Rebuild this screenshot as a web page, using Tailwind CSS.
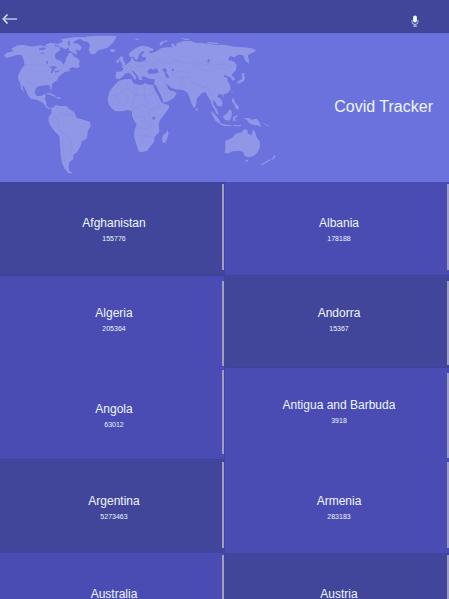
<!DOCTYPE html>
<html lang="en">
<head>
<meta charset="utf-8">
<meta name="viewport" content="width=device-width, initial-scale=1">
<title>Covid Tracker</title>
<script src="https://cdn.jsdelivr.net/npm/@tailwindcss/browser@4"></script>
</head>
<body class="flex h-screen flex-col bg-[#4a4cb3] font-['Liberation_Sans',Arial,sans-serif] text-[#eef6fb]">
<header class="flex h-[33px] shrink-0 items-center justify-between bg-[#42469b] pt-1 pr-7">
  <button type="button" aria-label="Back" class="flex h-6 w-5 items-center">
    <svg class="h-3 w-5" viewBox="0 0 20 12" fill="none" stroke="#e6eff8"><path d="M7.5 1.5 3.2 6l4.3 4.5" stroke-width="1.4"/><path d="M3 6h14" stroke="#bcc7e2" stroke-width="1.5"/></svg>
  </button>
  <button type="button" aria-label="Voice search" class="flex h-6 w-3 items-center justify-center pt-1">
    <svg class="h-3 w-2" viewBox="0 0 8 12"><rect x="2.1" y=".6" width="3.8" height="6.9" rx="1.9" fill="#f4fbff"/><path d="M1 5v1.5a3 3 0 0 0 6 0V5M4 9.3v1.9M2 11.2h4" fill="none" stroke="#c5d5e8" stroke-width=".9"/></svg>
  </button>
</header>
<main class="min-h-0 flex-1 overflow-x-hidden overflow-y-auto [scrollbar-width:none]">
<section class="flex h-[149px] items-center justify-between bg-[#6b72de] pr-4">
  <svg class="h-[149px] w-[300px] shrink-0" viewBox="0 9 900 447" role="img" aria-label="World map">
    <g fill="#9197e7">
      <path d="M12 78L20 68 34 66 40 62 34 56 52 46 72 45 96 50 120 46 150 52 168 46 176 52 182 60 172 66 164 74 168 88 184 94 190 104 196 96 198 84 206 72 206 68 216 70 222 80 232 84 240 94 236 104 242 108 232 114 216 112 206 118 212 122 194 126 176 140 172 150 156 162 154 184 148 166 134 166 118 168 108 174 104 188 110 198 124 198 132 192 138 196 134 206 138 212 140 228 148 234 158 232 148 238 138 232 130 220 112 210 92 206 84 196 78 182 72 170 66 164 72 188 64 176 60 158 54 146 56 132 64 118 74 104 70 88 66 76 50 74 34 80 20 84Z"/>
      <path d="M134 46L150 38 174 42 190 34 182 28 206 24 232 21 252 21 238 27 226 32 218 38 236 42 246 52 240 62 228 58 232 74 218 68 206 60 208 52 196 58 184 52 160 56 146 52Z"/>
      <path d="M238 25L266 19 306 17 350 18 346 28 338 40 322 54 296 60 284 72 272 73 266 60 270 46 264 36 250 33Z"/>
      <path d="M328 61l8-4 10 2 0 5-10 3zM134 192l12-4 16 6 8 6-12-2-12-5zM168 202l12 0 6 3-14 1z"/>
      <path d="M154 236L168 225 180 228 198 228 212 240 224 248 230 264 246 268 270 276 272 288 264 302 260 326 246 334 240 352 230 368 220 374 220 388 208 396 206 412 208 424 220 430 206 430 194 416 186 398 182 374 180 342 178 318 164 304 152 288 145 272 146 262 154 250Z"/>
      <path d="M347 145L348 126 366 124 370 116 364 108 378 104 386 98 392 92 394 84 400 84 402 94 420 94 436 92 438 82 428 82 424 76 434 66 426 64 416 76 414 88 406 90 402 80 390 82 386 72 396 62 412 52 428 47 444 50 460 57 458 64 446 64 450 70 466 66 484 54 500 52 520 52 512 44 518 40 528 50 530 40 548 34 572 32 586 38 610 40 640 44 676 44 700 50 730 52 752 54 770 62 756 68 744 76 748 102 736 92 730 76 714 74 704 82 690 78 684 90 700 94 710 104 708 120 700 128 694 134 706 148 698 152 690 140 680 138 674 134 670 140 684 144 682 152 690 164 692 178 682 190 668 194 656 192 652 200 662 206 668 220 664 230 652 228 646 216 638 210 640 222 654 244 644 238 636 226 632 212 624 200 616 186 606 188 590 206 588 228 582 234 574 220 568 202 562 188 550 180 526 178 510 172 520 182 530 190 522 204 504 214 490 218 486 208 474 186 462 168 464 148 448 146 438 142 424 138 428 150 418 150 412 136 400 124 394 122 410 142 404 150 398 138 388 128 376 130 368 140 356 148Z"/>
      <path d="M366 105l-2-8-8-10 6-8 8 2 0 10 6 8-2 6zM348 98l2-9 8 0-2 9zM478 46l4-10 18-5 4 2-16 6-2 7zM540 24l20 2 12 4-16 0zM402 26l20 0-10 4zM620 36l34 3 0 3-30-1z"/>
      <path d="M356 152L376 148 394 146 400 160 416 164 424 166 434 160 448 164 462 165 472 184 484 204 492 222 508 226 506 236 492 254 480 270 476 284 478 306 464 320 462 336 450 350 442 362 424 367 416 364 408 340 402 318 404 300 410 284 400 268 396 254 396 244 384 240 366 244 346 244 334 234 326 222 323 206 328 186 338 172Z"/>
      <path d="M502 301l4 8-4 16-6 13-8 0-2-12 4-12 8-4zM587 234l7 3 0 4-6 1zM632 242l8 6 14 16 8 14-2 4-14-10-8-16zM662 280l18 4 14 2 0 3-20-1-14-5zM644 236l8 6 4 12-6-3-6-10zM670 258l12-8 6-12 8 6-2 16-6 12-12-2-6-6zM700 260l10-4 4 2-10 6 6 10-4 0-2-8-2 8-4-2zM696 203l6 4 4 12 10 10 0 10-8-2-4-12-8-10zM732 264l14 0 10 6 14-4 8 10 6 16-10-6-10 0-16-6-8-10zM666 198l6-3 0 6zM694 184l4-2-2 8zM700 286l24-1 0 3-22 1zM784 276l16 8 14 8-14-5z"/>
      <path d="M724 128l8 2 3 18-8 8-14 5-2-5 14-8 2-12z"/>
      <path d="M676 332L696 324 706 312 716 308 724 308 732 298 744 300 742 310 754 316 760 298 766 308 770 322 780 336 780 350 772 368 760 378 746 382 734 378 730 366 718 362 698 364 686 370 674 370 676 358ZM736 389l10 0-4 7-5-2zM822 374l6 5-10 10-4-2 6-5zM812 389l-10 8-16 9-4-2 12-7 14-9z"/>
    </g>
    <g fill="#6b72de">
      <path d="M116 56l14-4 10 2-10 6-12 0zM118 71l12-4 4 4zM140 92l4 1 0 8-5 0zM166 44l12 4-2 3-12-3zM208 32l2 16-6-2 0-12z"/>
      <path d="M148 110l16-2 8 6-8 2-6 12-6 2 4-14zM164 124l14-3 0 3-12 4z"/>
      <path d="M442 124l10-9 6 4 12-4 6 12-12 4-18 0zM487 118l10-4 4 8-4 4 8 10 2 8-10-2-2-12zM516 116l6 2-1 6-6 0zM624 87l5 1-1 9-6 0zM458 260l8 0-2 9-7-1z"/>
      <path d="M416 84l8 2 4 8-16 2 2-6 6-2zM461 163l6 2 18 36 6 18-7-2-12-24-11-20zM498 162l8 4 10 12 8 3-10 3-10-8z"/>
    </g>
    <g fill="none" stroke="#858be2" stroke-width="1.6">
      <path d="M74 106h70l20 8M68 58l14-10M80 158l18 2 10 10M364 154l-20 30M326 198l24-4 30-20 24 20 32 2 24-4M380 154l2 20M400 158l8 22 0 16M432 164l4 40 14 22M350 194l8 30M382 200l-4 22-20 12M404 198l-8 30 6 20M404 234l26-10 22 16 28-10M404 262l28-4 8 20 22 14M406 294l30 4 20-12M410 316l32 0 12-14M422 338l12-20 20 4M448 246l4 50M464 202l18 28"/>
      <path d="M170 228l6 20 24 8 24-14M150 268l16-8 10 14-4 20 20 14 20 22 12 8M178 304l14 6-4 36 6 50M214 330l2 24-4 24M204 258l20-2"/>
      <path d="M384 104l14 8-8 12M400 96l12 14 28-4M416 98l28-2 22 16M460 104l14-14 24 10M502 100l24-10 30 10 26-4 26 12 20-8 20 6 24-6 22 10M580 100l20 18 32 8 28-12 20 2M516 130l24-8 28 8 14-20M534 144l26-4 22 22 30 8 18-12M550 142l-10 18 16 12M474 136l18 16 12 20M596 170l26 4 14 22M464 154l20 16 22 12"/>
    </g>
  </svg>
  <h1 class="pb-0.5 text-base leading-5 whitespace-nowrap">Covid Tracker</h1>
</section>
<ul id="countries" class="-mr-px grid auto-rows-[93px] grid-cols-2 grid-rows-[94px_92px_92px] text-center"></ul>
</main>
<template id="country">
  <li class="flex border-r border-[#41449f]">
    <button type="button" class="flex w-full">
      <span class="flex flex-1 flex-col pl-1.5">
        <span class="name text-xs leading-4"></span>
        <span class="cases pt-0.5 text-[7px] leading-3"></span>
      </span>
      <span class="bar w-[2px] self-stretch bg-[#a19fbe]"></span>
    </button>
  </li>
</template>
<script>
  const DARK = 'bg-[#42469b]', LIGHT = 'bg-[#4a4cb3]';
  const LOW = { text: ['pt-[33px]'], bar: ['mt-[2px]', 'mb-[5px]'] };
  const HIGH = { text: ['pt-[29px]'], bar: ['mt-[5px]', 'mb-[2px]'] };
  const SHADE = ['border-b', 'border-b-[#3f429a]'];
  const countries = [
    ['Afghanistan', 155776, DARK, LOW, true],
    ['Albania', 178188, LIGHT, LOW, true],
    ['Algeria', 205364, LIGHT, HIGH, false],
    ['Andorra', 15367, DARK, HIGH, true],
    ['Angola', 63012, LIGHT, LOW, true],
    ['Antigua and Barbuda', 3918, LIGHT, HIGH, false],
    ['Argentina', 5273463, DARK, LOW, false],
    ['Armenia', 283183, LIGHT, LOW, false],
    ['Australia', 194563, LIGHT, LOW, false],
    ['Austria', 998212, DARK, LOW, false],
  ];
  const list = document.getElementById('countries');
  const template = document.getElementById('country');
  for (const [name, cases, tone, place, shaded] of countries) {
    const item = template.content.firstElementChild.cloneNode(true);
    item.classList.add(tone);
    if (shaded) item.classList.add(...SHADE);
    item.querySelector('button > span').classList.add(...place.text);
    item.querySelector('.bar').classList.add(...place.bar);
    item.querySelector('.name').textContent = name;
    item.querySelector('.cases').textContent = cases;
    list.append(item);
  }
</script>
</body>
</html>
